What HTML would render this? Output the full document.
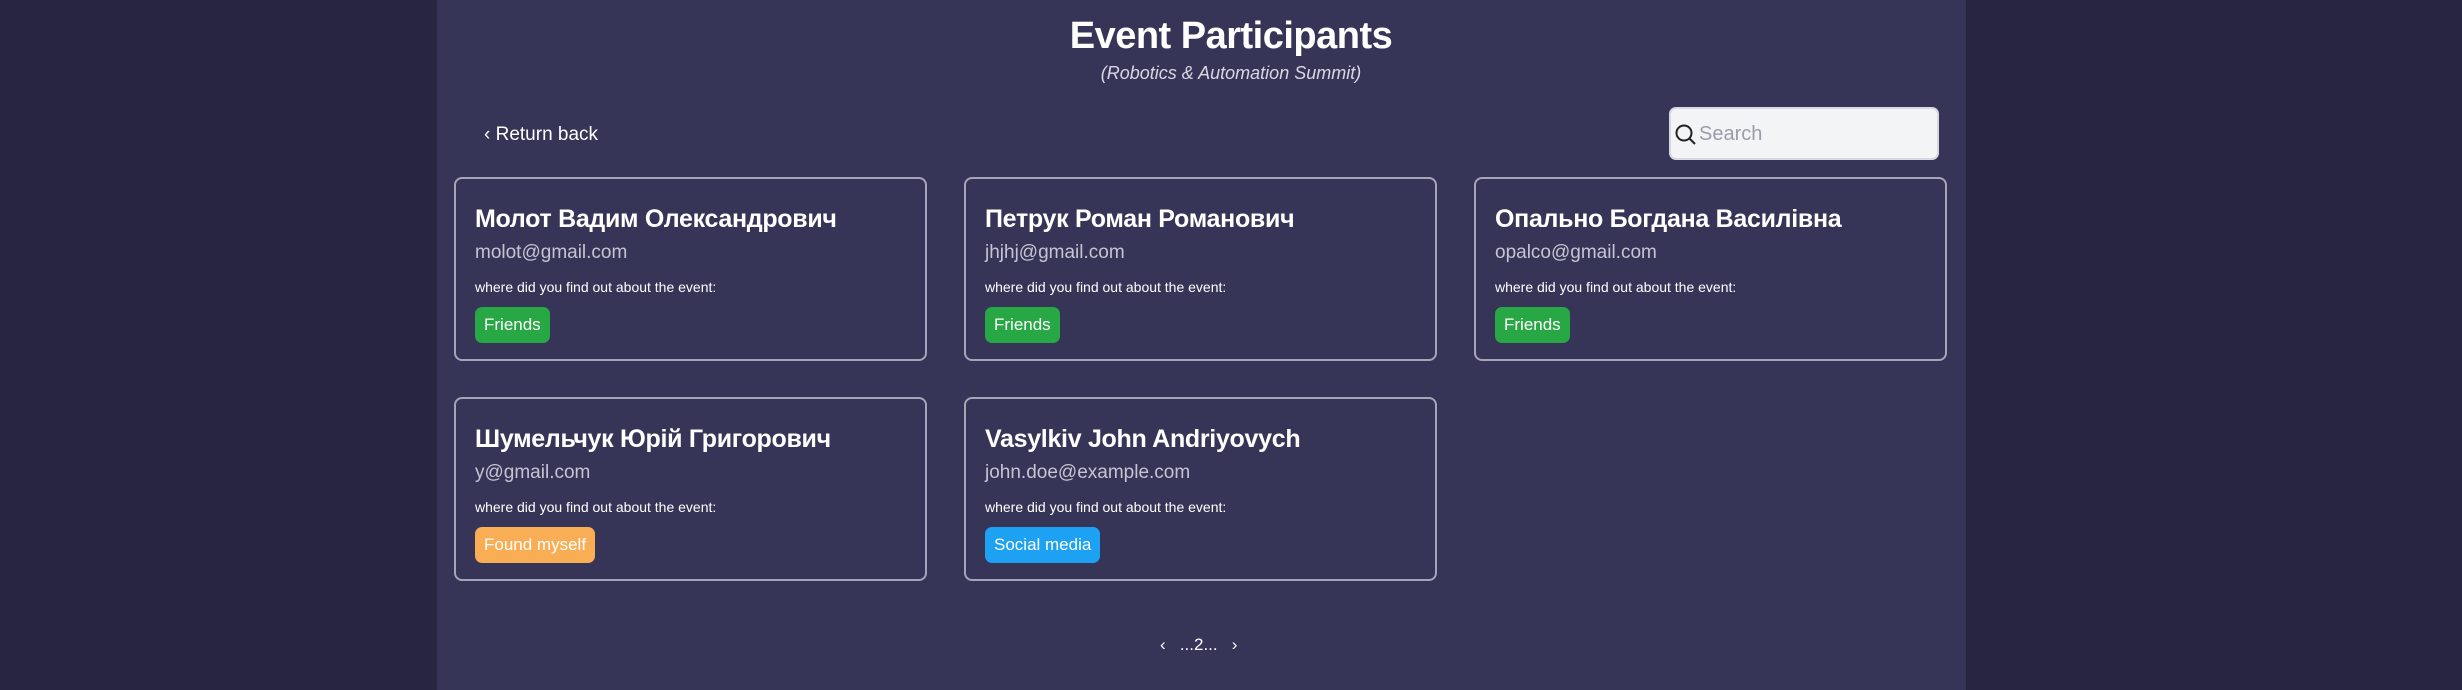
<!DOCTYPE html>
<html><head><meta charset="utf-8"><style>
*{box-sizing:border-box;margin:0;padding:0}
body{width:2462px;height:690px;background:#27253f;font-family:"Liberation Sans","DejaVu Sans",sans-serif;color:#fff;overflow:hidden;position:relative}
.panel{position:absolute;left:437px;top:0;width:1529px;height:690px;background:#373557}
h1{position:absolute;left:0;width:100%;text-align:center;top:15px;font-size:38px;font-weight:bold;letter-spacing:-0.5px}
.sub{position:absolute;left:0;width:100%;text-align:center;top:63px;font-size:18px;font-style:italic;color:#d8d8e4}
.back{position:absolute;left:484px;top:124px;font-size:19px}
.search{position:absolute;left:1669px;top:107px;width:270px;height:53px;background:#f3f4f6;border:2px solid #d8d9e0;border-radius:7px}
.search span{position:absolute;left:28px;top:14px;font-size:20px;color:#9a9cab}
.search svg{position:absolute;left:3px;top:14px}
.card{position:absolute;width:473px;height:184px;border:2px solid #a5a4b8;border-radius:8px;padding:24px 19px}
.name{font-size:25px;font-weight:bold;line-height:32px;letter-spacing:-0.3px}
.email{font-size:19px;color:#c5c4d2;margin-top:6px;line-height:24px}
.q{font-size:14px;margin-top:13px;line-height:18px}
.badge{display:inline-block;margin-top:11px;height:36px;line-height:36px;padding:0 9px;border-radius:7px;font-size:17px}
.pg{position:absolute;top:635px;left:1160px;font-size:17px}
</style></head><body>
<div class="panel"></div>
<h1>Event Participants</h1>
<div class="sub">(Robotics &amp; Automation Summit)</div>
<div class="back">‹ Return back</div>
<div class="search"><svg width="24" height="24" viewBox="0 0 24 24"><circle cx="10" cy="10" r="7.5" fill="none" stroke="#222" stroke-width="2"/><line x1="15.5" y1="15.5" x2="21" y2="21" stroke="#222" stroke-width="2"/></svg><span>Search</span></div>

<div class="card" style="left:454px;top:177px"><div class="name">Молот Вадим Олександрович</div><div class="email">molot@gmail.com</div><div class="q">where did you find out about the event:</div><div class="badge" style="background:#28a745">Friends</div></div>
<div class="card" style="left:964px;top:177px"><div class="name">Петрук Роман Романович</div><div class="email">jhjhj@gmail.com</div><div class="q">where did you find out about the event:</div><div class="badge" style="background:#28a745">Friends</div></div>
<div class="card" style="left:1474px;top:177px"><div class="name">Опально Богдана Василівна</div><div class="email">opalco@gmail.com</div><div class="q">where did you find out about the event:</div><div class="badge" style="background:#28a745">Friends</div></div>
<div class="card" style="left:454px;top:397px"><div class="name">Шумельчук Юрій Григорович</div><div class="email">y@gmail.com</div><div class="q">where did you find out about the event:</div><div class="badge" style="background:#f9ad54">Found myself</div></div>
<div class="card" style="left:964px;top:397px"><div class="name">Vasylkiv John Andriyovych</div><div class="email">john.doe@example.com</div><div class="q">where did you find out about the event:</div><div class="badge" style="background:#1da1f2">Social media</div></div>

<div class="pg">‹&nbsp;&nbsp;&nbsp;...2...&nbsp;&nbsp;&nbsp;›</div>
</body></html>
